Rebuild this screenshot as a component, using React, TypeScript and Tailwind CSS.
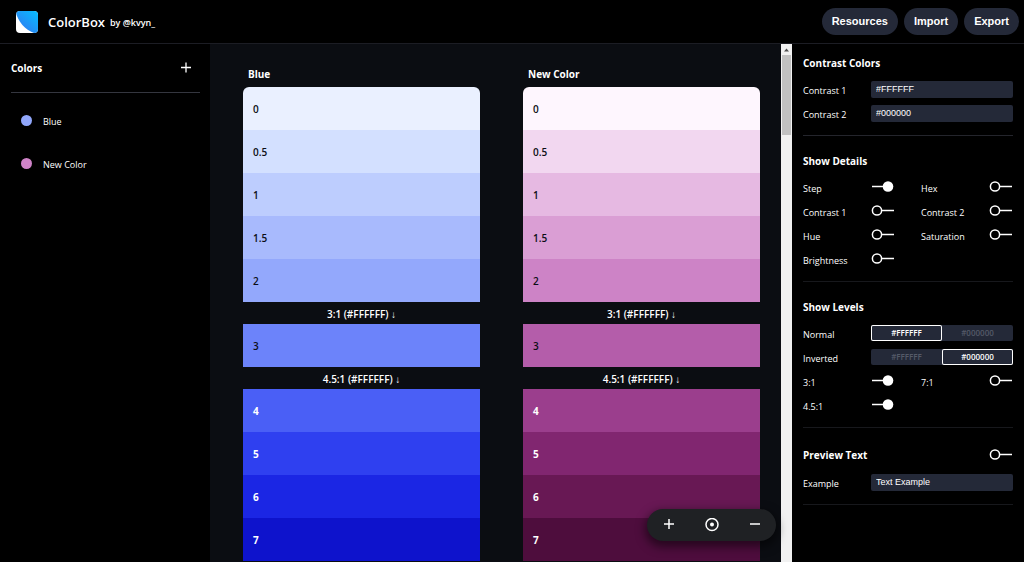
import React, { useState } from 'react';

interface Step {
  step: string;
  color: string;
}

interface Scale {
  name: string;
  dot: string;
  steps: Step[];
}

const scales: Scale[] = [
  {
    name: 'Blue',
    dot: '#91A7FB',
    steps: [
      { step: '0', color: '#EAF0FF' },
      { step: '0.5', color: '#D3E0FF' },
      { step: '1', color: '#BDCDFE' },
      { step: '1.5', color: '#A8BAFD' },
      { step: '2', color: '#93A8FC' },
      { step: '3', color: '#6C83FA' },
      { step: '4', color: '#4A5FF6' },
      { step: '5', color: '#2F40F0' },
      { step: '6', color: '#1B26E4' },
      { step: '7', color: '#0E13CC' },
    ],
  },
  {
    name: 'New Color',
    dot: '#CF83C8',
    steps: [
      { step: '0', color: '#FEF6FE' },
      { step: '0.5', color: '#F2D7F0' },
      { step: '1', color: '#E6B9E2' },
      { step: '1.5', color: '#DA9ED4' },
      { step: '2', color: '#CD83C6' },
      { step: '3', color: '#B45DAA' },
      { step: '4', color: '#9B3E8D' },
      { step: '5', color: '#812670' },
      { step: '6', color: '#681854' },
      { step: '7', color: '#4E0D3D' },
    ],
  },
];

// Contrast threshold shown right before the given step
const thresholds: Record<string, string> = {
  '3': '3:1 (#FFFFFF)',
  '4': '4.5:1 (#FFFFFF)',
};

const levelOptions = ['#FFFFFF', '#000000'];

function Logo() {
  return (
    <svg viewBox="0 0 22 22" className="size-[22px]" aria-hidden="true">
      <defs>
        <linearGradient id="logo-fill" x1="1" y1="0" x2="0.2" y2="0.9">
          <stop offset="0" stopColor="#06BFFF" />
          <stop offset="1" stopColor="#2F7BF2" />
        </linearGradient>
        <clipPath id="logo-clip">
          <rect width="22" height="22" rx="4" />
        </clipPath>
      </defs>
      <g clipPath="url(#logo-clip)">
        <rect width="22" height="22" fill="#fff" />
        <path d="M0 0H22V22H18C9 19 2 10 0 2Z" fill="url(#logo-fill)" />
      </g>
    </svg>
  );
}

interface ToggleProps {
  label: string;
  defaultOn?: boolean;
  heading?: boolean;
}

function Toggle({ label, defaultOn = false, heading = false }: ToggleProps) {
  const [on, setOn] = useState(defaultOn);
  return (
    <label className="relative flex h-6 cursor-pointer items-center justify-between">
      <span className={heading ? 'text-[10px] font-bold' : 'pt-[3px] text-[9px]'}>{label}</span>
      <input type="checkbox" className="sr-only" checked={on} onChange={() => setOn(!on)} />
      <svg viewBox="0 0 24 12" className="h-3 w-6" fill="none" stroke="#fff" strokeWidth="1.5">
        {on ? (
          <>
            <path d="M1 5.5H13" />
            <circle cx="17" cy="5.5" r="5.3" fill="#fff" stroke="none" />
          </>
        ) : (
          <>
            <path d="M11 5.5H23" />
            <circle cx="6" cy="5.5" r="4.6" />
          </>
        )}
      </svg>
    </label>
  );
}

function TextField({ id, label, value }: { id: string; label: string; value: string }) {
  return (
    <div className="flex h-6 items-center">
      <label htmlFor={id} className="w-17 shrink-0 pt-[3px] text-[9px]">
        {label}
      </label>
      <input
        id={id}
        defaultValue={value}
        className="h-[17px] min-w-0 flex-1 rounded-xs bg-[#242938] px-[5px] font-['Liberation_Sans',sans-serif] text-[9px] text-white outline-none"
      />
    </div>
  );
}

function LevelPicker({ label, initial }: { label: string; initial: string }) {
  const [selected, setSelected] = useState(initial);
  return (
    <div className="flex h-6 items-center" role="group" aria-label={label}>
      <span className="w-17 shrink-0 pt-[3px] text-[9px]">{label}</span>
      <div className="flex h-4 flex-1 rounded-xs bg-[#242938]">
        {levelOptions.map((option) => (
          <button
            key={option}
            aria-pressed={selected === option}
            onClick={() => setSelected(option)}
            className={`flex flex-1 items-center justify-center rounded-xs text-[8px] font-semibold ${
              selected === option ? 'text-white inset-ring-1 inset-ring-white' : 'text-[#555a68]'
            }`}
          >
            {option}
          </button>
        ))}
      </div>
    </div>
  );
}

function ScaleColumn({ scale }: { scale: Scale }) {
  return (
    <section className="flex-1">
      <h2 className="mb-[3px] h-5 px-[5px] text-[10px] leading-5 font-bold">{scale.name}</h2>
      <ul className="overflow-hidden rounded-t-md">
        {scale.steps.map(({ step, color }) => (
          <React.Fragment key={step}>
            {thresholds[step] && (
              <li className="h-[22px] text-center text-[10px] leading-6 font-semibold">{thresholds[step]} ↓</li>
            )}
            <li
              className={`flex h-[43px] items-center px-[10px] pt-[2px] text-[10px] ${
                Number(step) >= 4 ? 'font-bold text-white' : 'font-semibold text-[#0b0d14]'
              }`}
              style={{ backgroundColor: color }}
            >
              {step}
            </li>
          </React.Fragment>
        ))}
      </ul>
    </section>
  );
}

export default function App() {
  return (
    <div className="flex h-screen flex-col overflow-hidden bg-black font-['Open_Sans','Noto_Sans',sans-serif] text-white">
      <header className="flex h-11 shrink-0 items-center border-b border-[#1c1d24] pr-[5px] pl-4">
        <Logo />
        <h1 className="ml-[10px] pt-[2px] text-[13px] font-semibold">ColorBox</h1>
        <a href="#kvyn" className="ml-[5px] pt-[3px] text-[9px] font-semibold">
          by @kvyn_
        </a>
        <nav className="ml-auto flex gap-[6px] font-['Liberation_Sans',sans-serif] text-[11px] font-bold">
          <button className="h-[27px] rounded-full bg-[#242938] px-[10px]">Resources</button>
          <button className="h-[27px] rounded-full bg-[#242938] px-[10px]">Import</button>
          <button className="h-[27px] rounded-full bg-[#242938] px-[10px]">Export</button>
        </nav>
      </header>

      <div className="flex min-h-0 flex-1">
        {/* Color list */}
        <aside className="w-[210px] shrink-0 pr-[10px] pl-[11px]">
          <div className="flex h-[49px] items-center justify-between border-b border-[#34363f] pr-2">
            <h2 className="text-[10px] font-bold">Colors</h2>
            <button aria-label="Add color">
              <svg viewBox="0 0 12 12" className="size-3" stroke="#fff" strokeWidth="1.3">
                <path d="M6 0.5V10.5M1 5.5H11" />
              </svg>
            </button>
          </div>
          <ul className="pt-[6px]">
            {scales.map((scale) => (
              <li key={scale.name}>
                <button className="flex h-[43px] w-full items-center gap-[11px] px-[10px] text-[9px]">
                  <span className="size-[11px] rounded-full" style={{ backgroundColor: scale.dot }} />
                  <span className="pt-[2px]">{scale.name}</span>
                </button>
              </li>
            ))}
          </ul>
        </aside>

        {/* Scales */}
        <main className="relative flex min-w-0 flex-1 bg-[#0b0d12]">
          <div className="flex min-w-0 flex-1 gap-[43px] overflow-hidden pt-5 pr-[21px] pl-[33px]">
            {scales.map((scale) => (
              <ScaleColumn key={scale.name} scale={scale} />
            ))}
          </div>
          <div className="absolute right-4 bottom-[21px] flex h-8 w-[129px] items-center rounded-full bg-[#1f2124] shadow-[0_4px_10px_2px_rgba(0,0,0,0.5)]">
            <button aria-label="Zoom in" className="flex flex-1 justify-center">
              <svg viewBox="0 0 14 14" className="size-[14px]" stroke="#fff" strokeWidth="1.5">
                <path d="M7 1V11M2 6H12" />
              </svg>
            </button>
            <button aria-label="Reset zoom" className="flex flex-1 justify-center">
              <svg viewBox="0 0 14 14" className="size-[14px]" fill="none" stroke="#fff" strokeWidth="1.5">
                <circle cx="7" cy="6.5" r="6" />
                <circle cx="7" cy="6.5" r="2" fill="#fff" stroke="none" />
              </svg>
            </button>
            <button aria-label="Zoom out" className="flex flex-1 justify-center">
              <svg viewBox="0 0 14 14" className="size-[14px]" stroke="#fff" strokeWidth="1.5">
                <path d="M2 6H12" />
              </svg>
            </button>
          </div>
          <div className="flex w-[11px] shrink-0 flex-col items-center bg-[#f1f1f1]" aria-hidden="true">
            <svg viewBox="0 0 11 11" className="h-[11px] w-[11px]" fill="#505050">
              <path d="M3 7.5L5.5 4.5L8 7.5Z" />
            </svg>
            <div className="h-20 w-[9px] bg-[#c1c1c1]" />
          </div>
        </main>

        {/* Settings */}
        <aside className="w-[232px] shrink-0 px-[11px]">
          <section className="border-b border-[#24252c] pt-[9px] pb-[10px]">
            <h2 className="mb-1 h-5 text-[10px] leading-5 font-bold">Contrast Colors</h2>
            <TextField id="contrast-1" label="Contrast 1" value="#FFFFFF" />
            <TextField id="contrast-2" label="Contrast 2" value="#000000" />
          </section>
          <section className="border-b border-[#17181c] pt-[15px] pb-[10px]">
            <h2 className="mb-1 h-5 text-[10px] leading-5 font-bold">Show Details</h2>
            <div className="grid grid-cols-2 gap-x-[26px]">
              <Toggle label="Step" defaultOn />
              <Toggle label="Hex" />
              <Toggle label="Contrast 1" />
              <Toggle label="Contrast 2" />
              <Toggle label="Hue" />
              <Toggle label="Saturation" />
              <Toggle label="Brightness" />
            </div>
          </section>
          <section className="border-b border-[#17181c] pt-[15px] pb-[10px]">
            <h2 className="mb-1 h-5 text-[10px] leading-5 font-bold">Show Levels</h2>
            <LevelPicker label="Normal" initial="#FFFFFF" />
            <LevelPicker label="Inverted" initial="#000000" />
            <div className="grid grid-cols-2 gap-x-[26px]">
              <Toggle label="3:1" defaultOn />
              <Toggle label="7:1" />
              <Toggle label="4.5:1" defaultOn />
            </div>
          </section>
          <section className="border-b border-[#17181c] pt-[15px] pb-[10px]">
            <div className="mb-[3px]">
              <Toggle label="Preview Text" heading />
            </div>
            <TextField id="preview-text" label="Example" value="Text Example" />
          </section>
        </aside>
      </div>
    </div>
  );
}
